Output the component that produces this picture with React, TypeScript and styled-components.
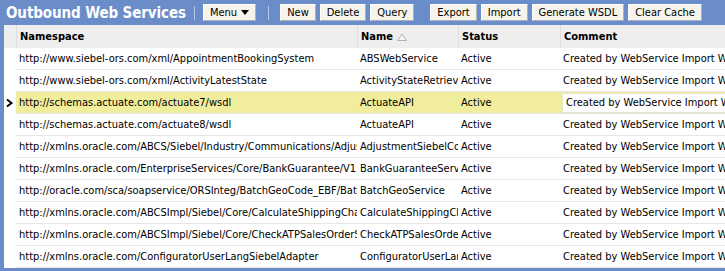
import styled, { createGlobalStyle } from 'styled-components';

const GlobalStyle = createGlobalStyle`
  html, body {
    margin: 0;
    padding: 0;
    overflow: hidden;
    background: #6a8dca;
  }
`;

const Frame = styled.div`
  width: 800px;
  background-color: #6a8dca;
  padding: 0 0 3px 4px;
  font-family: "DejaVu Sans Condensed", "DejaVu Sans", sans-serif;
  font-stretch: condensed;
  font-size: 11px;
  color: #000;
`;

const TitleBar = styled.div`
  height: 25px;
  display: flex;
  align-items: center;
  margin-left: -4px;
  padding-left: 6px;
`;

const Title = styled.h1`
  margin: 0;
  font-size: 15px;
  font-weight: bold;
  color: #fff;
  letter-spacing: -0.1px;
`;

const Divider = styled.span<{ $left: number; $right: number }>`
  width: 1px;
  height: 14px;
  background: #b9cae6;
  margin: 0 ${(p) => p.$right}px 0 ${(p) => p.$left}px;
`;

const Button = styled.button<{ $space?: number }>`
  height: 17px;
  margin-right: 4px;
  margin-left: ${(p) => p.$space || 0}px;
  padding: 0 6px;
  font-family: inherit;
  font-stretch: condensed;
  font-size: 11px;
  color: #000;
  background: #f6f4ea;
  border: 1px solid;
  border-color: #fdfdfb #aab2c0 #aab2c0 #fdfdfb;
  display: flex;
  align-items: center;
  gap: 4px;
`;

const Grid = styled.div`
  background: #fff;
`;

const cols = '12px 341px 101px 102px 1fr';

const HeaderRow = styled.div`
  display: grid;
  grid-template-columns: ${cols};
  height: 23px;
  background: #eeeeee;
  font-weight: bold;
`;

const HeadCell = styled.div`
  display: flex;
  align-items: center;
  padding-left: 3px;
  border-left: 1px solid #e4d8e6;
  white-space: nowrap;
  &:first-child {
    border-left: none;
  }
`;

const Row = styled.div`
  display: grid;
  grid-template-columns: ${cols};
  height: 22px;
  background: #fff;
`;

const Cell = styled.div<{ $selected?: boolean }>`
  display: flex;
  align-items: center;
  padding-left: 3px;
  overflow: hidden;
  white-space: nowrap;
  border-bottom: 1px solid #e6e6e6;
  background: ${(p) => (p.$selected ? '#f0ee9c' : '#fff')};
`;

const Gutter = styled.div`
  display: flex;
  align-items: center;
  background: #fff;
`;

const EditBox = styled.div`
  margin-left: -1px;
  height: 18px;
  width: 100%;
  display: flex;
  align-items: center;
  padding-left: 3px;
  background: #fff;
  border: 1px solid #e8e6c8;
  white-space: nowrap;
`;

const rows = [
  ['http://www.siebel-ors.com/xml/AppointmentBookingSystem', 'ABSWebService'],
  ['http://www.siebel-ors.com/xml/ActivityLatestState', 'ActivityStateRetrieval'],
  ['http://schemas.actuate.com/actuate7/wsdl', 'ActuateAPI'],
  ['http://schemas.actuate.com/actuate8/wsdl', 'ActuateAPI'],
  ['http://xmlns.oracle.com/ABCS/Siebel/Industry/Communications/AdjustmentSiebelCommsReqABCS', 'AdjustmentSiebelCommsReq'],
  ['http://xmlns.oracle.com/EnterpriseServices/Core/BankGuarantee/V1', 'BankGuaranteeService'],
  ['http://oracle.com/sca/soapservice/ORSInteg/BatchGeoCode_EBF/BatchGeoService', 'BatchGeoService'],
  ['http://xmlns.oracle.com/ABCSImpl/Siebel/Core/CalculateShippingChargeSalesOrder', 'CalculateShippingCharge'],
  ['http://xmlns.oracle.com/ABCSImpl/Siebel/Core/CheckATPSalesOrderSiebelReqABCS', 'CheckATPSalesOrderService'],
  ['http://xmlns.oracle.com/ConfiguratorUserLangSiebelAdapter', 'ConfiguratorUserLangSiebelAdapter'],
];

const comment = 'Created by WebService Import Wizard';

export default function App() {
  return (
    <Frame>
      <GlobalStyle />
      <TitleBar>
        <Title>Outbound Web Services</Title>
        <Divider $left={8} $right={8} />
        <Button>
          Menu
          <svg width="8" height="5" viewBox="0 0 8 5">
            <path d="M0 0h8L4 5z" fill="#000" />
          </svg>
        </Button>
        <Divider $left={8} $right={11} />
        <Button>New</Button>
        <Button>Delete</Button>
        <Button>Query</Button>
        <Button $space={12}>Export</Button>
        <Button>Import</Button>
        <Button>Generate WSDL</Button>
        <Button>Clear Cache</Button>
      </TitleBar>
      <Grid>
        <HeaderRow>
          <HeadCell />
          <HeadCell>Namespace</HeadCell>
          <HeadCell>
            Name
            <svg width="12" height="8" viewBox="0 0 12 8" style={{ marginLeft: 3 }}>
              <path d="M6 1L10.5 7.5H1.5z" fill="#f4f4f4" stroke="#b4b4b4" />
            </svg>
          </HeadCell>
          <HeadCell>Status</HeadCell>
          <HeadCell>Comment</HeadCell>
        </HeaderRow>
        {rows.map(([ns, name], i) => {
          const sel = i === 2;
          return (
            <Row key={i}>
              <Gutter>
                {sel && (
                  <svg width="10" height="10" viewBox="0 0 10 10" style={{ marginLeft: 1 }}>
                    <path d="M2 1.5L6.5 5L2 8.5" fill="none" stroke="#000" strokeWidth="2" />
                  </svg>
                )}
              </Gutter>
              <Cell $selected={sel}>{ns}</Cell>
              <Cell $selected={sel}>{name}</Cell>
              <Cell $selected={sel}>Active</Cell>
              <Cell $selected={sel}>{sel ? <EditBox>{comment}</EditBox> : comment}</Cell>
            </Row>
          );
        })}
      </Grid>
    </Frame>
  );
}
